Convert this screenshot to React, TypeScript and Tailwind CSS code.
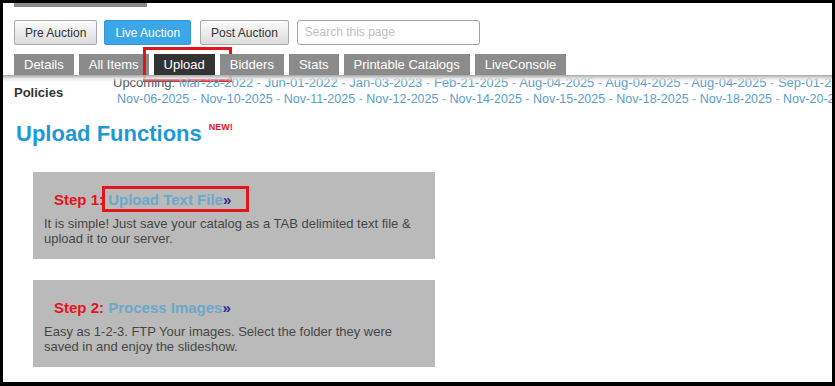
import React from 'react'

const line1 = [
  'Mar-28-2022',
  'Jun-01-2022',
  'Jan-03-2023',
  'Feb-21-2025',
  'Aug-04-2025',
  'Aug-04-2025',
  'Aug-04-2025',
  'Sep-01-2025',
]
const line2 = [
  'Nov-06-2025',
  'Nov-10-2025',
  'Nov-11-2025',
  'Nov-12-2025',
  'Nov-14-2025',
  'Nov-15-2025',
  'Nov-18-2025',
  'Nov-18-2025',
  'Nov-20-2025',
]

const tabs = ['Details', 'All Items', 'Upload', 'Bidders', 'Stats', 'Printable Catalogs', 'LiveConsole']

function Dates({ items }: { items: string[] }) {
  return (
    <>
      {items.map((d, i) => (
        <span key={i}>
          {i > 0 && <span className="text-[#7fb3d3]"> - </span>}
          <a className="text-[#5b9ec8]">{d}</a>
        </span>
      ))}
    </>
  )
}

function StepBox({
  step,
  title,
  text,
  boxed,
}: {
  step: string
  title: string
  text: string
  boxed?: boolean
}) {
  return (
    <div className="ml-[30px] h-[87px] w-[402px] bg-[#bababa] pl-[11px] pr-[12px] pt-[19px]">
      <div className="pl-[10px] text-[15px] font-bold leading-[18px]">
        <span className="text-[#e3141b]">{step} </span>
        <span className="relative">
          <span className="text-[#6ba8ca]">{title}</span>
          <span className="text-[#2a2a8c]">»</span>
          {boxed && (
            <span className="absolute -left-[6px] -right-[18px] -top-[5px] -bottom-[4px] border-[3px] border-[#e0161b]" />
          )}
        </span>
      </div>
      <p className="mt-[7px] text-[13px] leading-[15px] text-[#474747]">{text}</p>
    </div>
  )
}

export default function App() {
  return (
    <div className="h-[386px] w-[835px] overflow-hidden border-b-[4px] border-l-[3px] border-r-[3px] border-t-[3px] border-black bg-white font-['Liberation_Sans',Arial,sans-serif]">
      {/* top bar remnant */}
      <div className="ml-[11px] h-[4px] w-[133px] bg-[#8a8a8a]" />

      {/* Auction switch + search */}
      <div className="ml-[11px] mt-[13px] flex items-center gap-[7px]">
        <button className="h-[25px] rounded-[2px] border border-[#aaaaaa] bg-linear-to-b from-[#fbfbfb] to-[#dcdcdc] px-[10px] text-[12px] text-[#333]">
          Pre Auction
        </button>
        <button className="h-[25px] rounded-[2px] border border-[#3198da] bg-[#3ba6e8] px-[10px] text-[12px] text-white">
          Live Auction
        </button>
        <button className="ml-[2px] h-[25px] rounded-[2px] border border-[#aaaaaa] bg-linear-to-b from-[#fbfbfb] to-[#dcdcdc] px-[10px] text-[12px] text-[#333]">
          Post Auction
        </button>
        <input
          placeholder="Search this page"
          className="ml-[1px] -mt-[1px] h-[25px] w-[183px] rounded-[3px] border border-[#a0a0a0] px-[7px] text-[12px] outline-none placeholder:text-[#c0c0c0]"
        />
      </div>

      {/* Tabs */}
      <div className="ml-[11px] mt-[9px] flex gap-[5px]">
        {tabs.map((t) => (
          <div
            key={t}
            className={`relative flex h-[21px] items-center px-[10px] text-[13px] text-white ${
              t === 'Upload' ? 'bg-[#333333]' : 'bg-[#8b8b8b]'
            }`}
          >
            {t}
            {t === 'Upload' && (
              <span className="absolute -bottom-[7px] -left-[11px] -right-[17px] -top-[7px] border-[3px] border-[#e0161b]" />
            )}
          </div>
        ))}
      </div>

      {/* Policies + upcoming dates */}
      <div className="relative flex">
        <div className="ml-[11px] mt-[10px] w-[99px] shrink-0 text-[13px] font-bold leading-[16px] text-[#333]">
          Policies
        </div>
        <div className="min-w-0 whitespace-nowrap leading-[16px]">
          <div className="text-[13px]">
            <span className="text-[#555]">Upcoming: </span>
            <Dates items={line1} />
          </div>
          <div className="pl-[4px] text-[12.5px]">
            <Dates items={line2} />
          </div>
        </div>
        <div className="absolute inset-x-0 top-0 h-[7px] bg-linear-to-b from-[#a6a6a6] via-[#e2e2e2]/80 to-transparent" />
      </div>

      {/* Heading */}
      <div className="ml-[13px] mt-[14px] flex items-start">
        <h1 className="text-[22px] font-bold leading-[26px] text-[#1e98d6]">Upload Functions</h1>
        <span className="ml-[7px] mt-[1px] text-[9px] font-bold leading-[10px] text-[#e3141b]">NEW!</span>
      </div>

      <div className="mt-[25px]">
        <StepBox
          step="Step 1:"
          title="Upload Text File"
          text="It is simple! Just save your catalog as a TAB delimited text file & upload it to our server."
          boxed
        />
      </div>
      <div className="mt-[21px]">
        <StepBox
          step="Step 2:"
          title="Process Images"
          text="Easy as 1-2-3. FTP Your images. Select the folder they were saved in and enjoy the slideshow."
        />
      </div>
    </div>
  )
}
